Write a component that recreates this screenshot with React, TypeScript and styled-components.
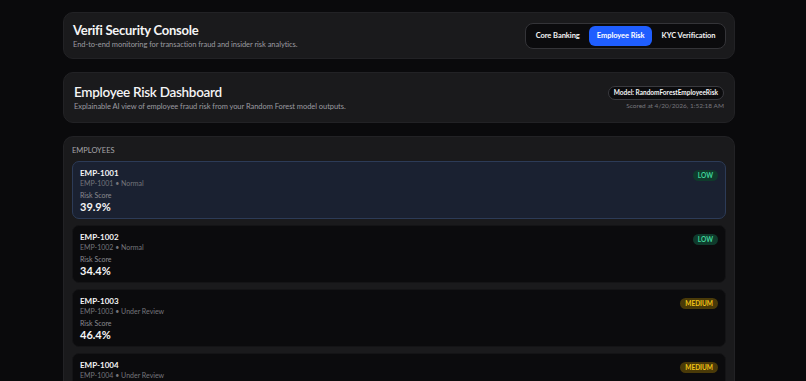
import React from 'react'
import styled, { createGlobalStyle, css } from 'styled-components'

const GlobalStyle = createGlobalStyle`
  html, body {
    margin: 0;
    padding: 0;
    background: #0a0a0c;
    font-family: Lato, 'Noto Sans', sans-serif;
    color: #f4f4f5;
  }
  * { box-sizing: border-box; }
`

const Page = styled.div`
  width: 806px;
  height: 381px;
  overflow: hidden;
  padding: 12px 71px 0 63px;
  display: flex;
  flex-direction: column;
  gap: 13px;
`
const Card = styled.section`
  flex-shrink: 0;
  background: #1a1a1c;
  border: 1px solid #222225;
  border-radius: 10px;
`
const Header = styled(Card)`
  height: 47px;
  padding: 0 8px 0 9px;
  display: flex;
  align-items: center;
  justify-content: space-between;
`
const Title = styled.h1`
  margin: 0;
  font-size: 13px;
  font-weight: 700;
  line-height: 17px;
  letter-spacing: -0.25px;
`
const Subtitle = styled.p`
  margin: 1px 0 0;
  font-size: 7.5px;
  line-height: 10px;
  color: #9a9aa0;
  letter-spacing: -0.05px;
`
const Tabs = styled.nav`
  display: flex;
  padding: 2px;
  gap: 2px;
  background: #0b0b0d;
  border: 1px solid #343438;
  border-radius: 8px;
`
const Tab = styled.button<{ $active?: boolean }>`
  border: none;
  background: transparent;
  color: #f4f4f5;
  font-family: inherit;
  font-size: 7.5px;
  font-weight: 700;
  letter-spacing: -0.05px;
  height: 20px;
  padding: 0 7.5px;
  border-radius: 6px;
  cursor: pointer;
  ${(p) =>
    p.$active &&
    css`
      background: #1f5eff;
      color: #ffffff;
    `}
`
const Hero = styled(Card)`
  height: 51px;
  padding: 0 10px 0 10px;
  display: flex;
  align-items: center;
  justify-content: space-between;
`
const HeroTitle = styled.h2`
  margin: 0;
  font-size: 13.5px;
  font-weight: 600;
  line-height: 18px;
  letter-spacing: -0.3px;
`
const Meta = styled.div`
  display: flex;
  flex-direction: column;
  align-items: flex-end;
  gap: 2px;
`
const ModelPill = styled.span`
  font-size: 6.5px;
  font-weight: 700;
  line-height: 12px;
  padding: 0 5px;
  border: 1px solid #3a3a3f;
  border-radius: 999px;
  background: #0b0b0d;
`
const Scored = styled.span`
  font-size: 6.5px;
  color: #77777d;
`
const ListCard = styled(Card)`
  flex: 1;
  padding: 9px 8px 0 8px;
  border-bottom: none;
  border-radius: 10px 10px 0 0;
`
const ListLabel = styled.div`
  font-size: 7.5px;
  color: #a6a6ab;
  text-transform: uppercase;
  margin-bottom: 6px;
`
const List = styled.div`
  display: flex;
  flex-direction: column;
  gap: 6px;
`
const Row = styled.div<{ $selected?: boolean }>`
  height: 58px;
  padding: 6px 7px 0 7px;
  border-radius: 7px;
  display: flex;
  justify-content: space-between;
  align-items: flex-start;
  background: #0b0b0d;
  border: 1px solid #141416;
  ${(p) =>
    p.$selected &&
    css`
      background: #1a2131;
      border-color: #2c3b57;
    `}
`
const EmpId = styled.div`
  font-size: 8px;
  font-weight: 700;
  line-height: 10px;
`
const EmpSub = styled.div`
  font-size: 7px;
  color: #75757b;
  line-height: 10px;
`
const ScoreLabel = styled.div`
  font-size: 7px;
  color: #8a8a90;
  margin-top: 3px;
  line-height: 9px;
`
const Score = styled.div`
  font-size: 11px;
  font-weight: 700;
  line-height: 14px;
`
const Badge = styled.span<{ $level: 'low' | 'medium' }>`
  margin-top: 2px;
  font-size: 6.5px;
  font-weight: 700;
  line-height: 11px;
  padding: 0 5px;
  border-radius: 999px;
  ${(p) =>
    p.$level === 'low'
      ? css`
          background: #0f3b2c;
          color: #3fd49a;
        `
      : css`
          background: #4a3a08;
          color: #f2c416;
        `}
`

const employees = [
  { id: 'EMP-1001', status: 'Normal', score: '39.9%', level: 'low' as const },
  { id: 'EMP-1002', status: 'Normal', score: '34.4%', level: 'low' as const },
  { id: 'EMP-1003', status: 'Under Review', score: '46.4%', level: 'medium' as const },
  { id: 'EMP-1004', status: 'Under Review', score: '51.2%', level: 'medium' as const },
]

const App = () => {
  return (
    <>
      <GlobalStyle />
      <Page>
        <Header>
          <div>
            <Title>Verifi Security Console</Title>
            <Subtitle>End-to-end monitoring for transaction fraud and insider risk analytics.</Subtitle>
          </div>
          <Tabs>
            <Tab>Core Banking</Tab>
            <Tab $active>Employee Risk</Tab>
            <Tab>KYC Verification</Tab>
          </Tabs>
        </Header>

        <Hero>
          <div>
            <HeroTitle>Employee Risk Dashboard</HeroTitle>
            <Subtitle>Explainable AI view of employee fraud risk from your Random Forest model outputs.</Subtitle>
          </div>
          <Meta>
            <ModelPill>Model: RandomForestEmployeeRisk</ModelPill>
            <Scored>Scored at 4/20/2026, 1:52:18 AM</Scored>
          </Meta>
        </Hero>

        <ListCard>
          <ListLabel>Employees</ListLabel>
          <List>
            {employees.map((e, i) => (
              <Row key={e.id} $selected={i === 0}>
                <div>
                  <EmpId>{e.id}</EmpId>
                  <EmpSub>
                    {e.id} • {e.status}
                  </EmpSub>
                  <ScoreLabel>Risk Score</ScoreLabel>
                  <Score>{e.score}</Score>
                </div>
                <Badge $level={e.level}>{e.level.toUpperCase()}</Badge>
              </Row>
            ))}
          </List>
        </ListCard>
      </Page>
    </>
  )
}

export default App
